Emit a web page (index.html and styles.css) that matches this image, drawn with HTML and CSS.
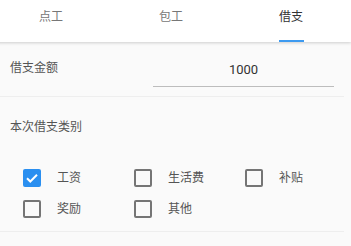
FILE: index.html
```html
<!DOCTYPE html>
<html lang="zh">
<head>
    <meta charset="UTF-8">
    <title>借支</title>
    <link rel="stylesheet" href="styles.css">
</head>
<body>

    <div class="tabs">
        <div class="tab">点工</div>
        <div class="tab">包工</div>
        <div class="tab active">借支<span class="indicator"></span></div>
    </div>

    <div class="amount-row">
        <label class="field-label" for="amount">借支金额</label>
        <input class="amount-input" id="amount" type="text" value="1000">
    </div>

    <div class="type-section">
        <div class="section-title">本次借支类别</div>
        <div class="check-grid">
            <label class="check-item"><span class="box checked"><svg viewBox="0 0 18 18" width="18" height="18"><path d="M4 9.2l3.3 3.3L14 5.8" fill="none" stroke="#fff" stroke-width="2"/></svg></span>工资</label>
            <label class="check-item"><span class="box"></span>生活费</label>
            <label class="check-item"><span class="box"></span>补贴</label>
            <label class="check-item"><span class="box"></span>奖励</label>
            <label class="check-item"><span class="box"></span>其他</label>
        </div>
    </div>

</body>
</html>
```

FILE: styles.css
```css
body {
    margin: 0;
    background-color: #fafafa;
    font-family: Roboto, "Noto Sans CJK SC", sans-serif;
    font-size: 12px;
    color: #555;
}
.tabs {
    display: grid;
    grid-template-columns: 120px 120px 120px;
    margin-left: -9px;
    height: 42px;
    background-color: white;
    box-shadow: 0 1px 3px rgba(0,0,0,0.18);
}
.tab {
    display: flex;
    flex-direction: column;
    align-items: center;
    padding-top: 9px;
    line-height: 17px;
    color: #777;
}
.tab.active {
    color: #333;
}
.indicator {
    margin-top: auto;
    width: 25px;
    height: 2px;
    background-color: #3d9af0;
}
.amount-row {
    display: flex;
    align-items: flex-start;
    width: 344px;
    height: 55px;
    box-sizing: border-box;
    padding-left: 10px;
    border-bottom: 1px solid #eee;
}
.field-label {
    margin-top: 18px;
    line-height: 17px;
}
.amount-input {
    margin: 14px 10px 0 auto;
    width: 181px;
    height: 31px;
    box-sizing: border-box;
    padding: 0 0 4px 0;
    border: none;
    border-bottom: 1px solid #bdbdbd;
    background: transparent;
    text-align: center;
    font-family: Roboto, sans-serif;
    font-size: 13px;
    color: #333;
    outline: none;
}
.type-section {
    width: 344px;
    padding-top: 22px;
    padding-bottom: 13px;
    border-bottom: 1px solid #eee;
}
.section-title {
    padding-left: 10px;
    line-height: 17px;
}
.check-grid {
    display: grid;
    grid-template-columns: 111px 111px 111px;
    row-gap: 13px;
    margin-top: 33px;
    padding-left: 23px;
}
.check-item {
    display: flex;
    align-items: center;
    height: 18px;
    line-height: 18px;
}
.box {
    width: 18px;
    height: 18px;
    box-sizing: border-box;
    border: 2px solid #757575;
    border-radius: 2px;
    margin-right: 16px;
}
.box.checked {
    border: none;
    background-color: #2a8ff0;
}
.box svg {
    display: block;
}
```
